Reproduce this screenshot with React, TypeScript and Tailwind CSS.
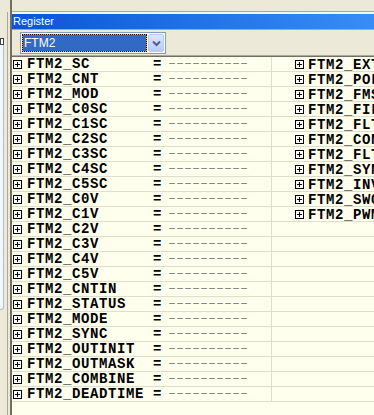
import React from 'react';

const leftRegs = [
    'FTM2_SC', 'FTM2_CNT', 'FTM2_MOD', 'FTM2_C0SC', 'FTM2_C1SC', 'FTM2_C2SC', 'FTM2_C3SC',
    'FTM2_C4SC', 'FTM2_C5SC', 'FTM2_C0V', 'FTM2_C1V', 'FTM2_C2V', 'FTM2_C3V', 'FTM2_C4V',
    'FTM2_C5V', 'FTM2_CNTIN', 'FTM2_STATUS', 'FTM2_MODE', 'FTM2_SYNC', 'FTM2_OUTINIT',
    'FTM2_OUTMASK', 'FTM2_COMBINE', 'FTM2_DEADTIME',
];

const rightRegs = [
    'FTM2_EXTTRIG', 'FTM2_POL', 'FTM2_FMS', 'FTM2_FILTER', 'FTM2_FLTCTRL', 'FTM2_CONF',
    'FTM2_FLTPOL', 'FTM2_SYNCONF', 'FTM2_INVCTRL', 'FTM2_SWOCTRL', 'FTM2_PWMLOAD',
];

function Expander() {
    return (
        <svg width="9" height="9" viewBox="0 0 9 9" className="shrink-0" shapeRendering="crispEdges">
            <rect x="0.5" y="0.5" width="8" height="8" fill="#ffffff" stroke="#000000" />
            <line x1="2" y1="4.5" x2="7" y2="4.5" stroke="#000000" />
            <line x1="4.5" y1="2" x2="4.5" y2="7" stroke="#000000" />
        </svg>
    );
}

function RegName({ name }: { name: string }) {
    return (
        <span className="font-['Liberation_Mono',monospace] text-[14px] font-bold tracking-[0.6px] leading-none text-black whitespace-nowrap">
            {name}
        </span>
    );
}

export default function App() {
    return (
        <div className="w-[374px] h-[415px] overflow-hidden bg-[#ece9d8] flex font-['Liberation_Sans',sans-serif]">
            {/* strip of the neighbouring pane */}
            <div className="w-[10px] flex shrink-0">
                <div className="w-[7px] flex flex-col">
                    <div className="h-[38px]" />
                    <div className="h-[7px] w-[4px] border border-[#404040] bg-white" />
                    <div className="h-[265px] w-[4px] bg-[#f4f8fe] border-r border-b border-[#a9bde6] rounded-br-[3px]" />
                </div>
                <div className="w-px bg-[#aca899] mt-[12px]" />
                <div className="w-[2px]" />
            </div>

            {/* Register pane */}
            <div className="flex-1 flex flex-col border-l-2 border-[#716f64]">
                <div className="h-[11px]" />
                <div className="h-px bg-[#aca899]" />
                <div className="h-[2px] bg-[#f5f4ee]" />
                <div className="h-[15px] bg-gradient-to-r from-[#0a54d6] to-[#3d93fb] text-white text-[11px] leading-[15px] pl-[1px]">
                    Register
                </div>
                <div className="h-px bg-[#aca899]" />
                <div className="h-[25px] flex items-start pt-[2px] pl-[8px]">
                    <div className="w-[146px] h-[22px] border border-[#7f9db9] bg-white flex p-px">
                        <div className="flex-1 bg-[#e9a23b] border border-dotted border-black">
                            <div className="h-full bg-[#316ac5] text-white text-[12px] leading-[17px] pl-px">FTM2</div>
                        </div>
                        <div className="w-[16px] ml-px rounded-[2px] bg-gradient-to-b from-[#dce6fd] to-[#b7cbf8] border border-[#b9cbf3] flex items-center justify-center">
                            <svg width="9" height="7" viewBox="0 0 9 7">
                                <path d="M1 1.5 L4.5 5 L8 1.5" fill="none" stroke="#4d6185" strokeWidth="2" />
                            </svg>
                        </div>
                    </div>
                </div>
                <div className="h-[2px] bg-[#716f64] border-t border-[#aca899]" />

                <div className="flex-1 bg-[#ffffee] flex flex-col">
                    {leftRegs.map((name, i) => (
                        <div key={name} className="h-[15px] shrink-0 flex border-b border-[#dedecd]">
                            <div className="w-[260px] shrink-0 flex items-center pl-[1px] border-r border-[#dedecd]">
                                <Expander />
                                <span className="w-[131px] pl-[5px] shrink-0 flex">
                                    <RegName name={name} />
                                </span>
                                <span className="w-[15px] shrink-0 font-['Liberation_Mono',monospace] text-[14px] font-bold leading-none text-black">=</span>
                                <span className="font-['Liberation_Mono',monospace] text-[13.33px] leading-none text-[#808080] whitespace-nowrap">––––––––––</span>
                            </div>
                            <div className="flex-1 flex items-center pl-[23px] overflow-hidden">
                                {rightRegs[i] && (
                                    <>
                                        <Expander />
                                        <span className="pl-[4px]">
                                            <RegName name={rightRegs[i]} />
                                        </span>
                                    </>
                                )}
                            </div>
                        </div>
                    ))}
                </div>
            </div>
        </div>
    );
}
